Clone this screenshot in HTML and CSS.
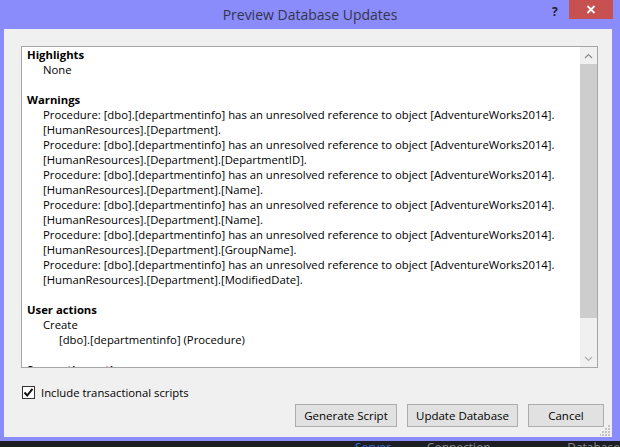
FILE: index.html
```html
<!DOCTYPE html>
<html lang="en">
<head>
    <meta charset="UTF-8">
    <title>Preview Database Updates</title>
    <link rel="stylesheet" href="styles.css">
</head>
<body>
    <div class="window">
        <div class="titlebar">
            <div class="title">Preview Database Updates</div>
            <div class="help">?</div>
            <div class="close">
                <svg width="10" height="9" viewBox="0 0 10 9"><path d="M1.5 1 L8.5 8 M8.5 1 L1.5 8" stroke="#fff" stroke-width="1.8"/></svg>
            </div>
        </div>

        <div class="client">
            <div class="panel">
                <div class="report">
                    <div class="head">Highlights</div>
                    <div class="l1">None</div>
                    <div class="blank"></div>

                    <div class="head">Warnings</div>
                    <div class="l1">Procedure: [dbo].[departmentinfo] has an unresolved reference to object [AdventureWorks2014].<br>[HumanResources].[Department].</div>
                    <div class="l1">Procedure: [dbo].[departmentinfo] has an unresolved reference to object [AdventureWorks2014].<br>[HumanResources].[Department].[DepartmentID].</div>
                    <div class="l1">Procedure: [dbo].[departmentinfo] has an unresolved reference to object [AdventureWorks2014].<br>[HumanResources].[Department].[Name].</div>
                    <div class="l1">Procedure: [dbo].[departmentinfo] has an unresolved reference to object [AdventureWorks2014].<br>[HumanResources].[Department].[Name].</div>
                    <div class="l1">Procedure: [dbo].[departmentinfo] has an unresolved reference to object [AdventureWorks2014].<br>[HumanResources].[Department].[GroupName].</div>
                    <div class="l1">Procedure: [dbo].[departmentinfo] has an unresolved reference to object [AdventureWorks2014].<br>[HumanResources].[Department].[ModifiedDate].</div>
                    <div class="blank"></div>

                    <div class="head">User actions</div>
                    <div class="l1">Create</div>
                    <div class="l2">[dbo].[departmentinfo] (Procedure)</div>
                    <div class="blank"></div>

                    <div class="head">Supporting actions</div>
                </div>
                <div class="scrollbar">
                    <div class="arrow">
                        <svg width="9" height="6" viewBox="0 0 9 6"><path d="M1 5 L4.5 1.5 L8 5" fill="none" stroke="#8a8a8a" stroke-width="1.2"/></svg>
                    </div>
                    <div class="thumb"></div>
                    <div class="track"></div>
                    <div class="arrow">
                        <svg width="9" height="6" viewBox="0 0 9 6"><path d="M1 1 L4.5 4.5 L8 1" fill="none" stroke="#b0b0b0" stroke-width="1.2"/></svg>
                    </div>
                </div>
            </div>

            <label class="option">
                <span class="checkbox">
                    <svg width="11" height="11" viewBox="0 0 11 11"><path d="M1.5 5.5 L4.2 8.5 L9.5 1.8" fill="none" stroke="#111" stroke-width="2"/></svg>
                </span>
                Include transactional scripts
            </label>

            <div class="buttons">
                <button class="btn generate">Generate Script</button>
                <button class="btn update">Update Database</button>
                <button class="btn cancel">Cancel</button>
            </div>

            <svg class="grip" width="11" height="11" viewBox="0 0 11 11">
                <rect x="8" y="0" width="2" height="2" fill="#c4c4c4"/>
                <rect x="5" y="3" width="2" height="2" fill="#c4c4c4"/>
                <rect x="8" y="3" width="2" height="2" fill="#c4c4c4"/>
                <rect x="2" y="6" width="2" height="2" fill="#c4c4c4"/>
                <rect x="5" y="6" width="2" height="2" fill="#c4c4c4"/>
                <rect x="8" y="6" width="2" height="2" fill="#c4c4c4"/>
                <rect x="-1" y="9" width="2" height="2" fill="#c4c4c4"/>
                <rect x="2" y="9" width="2" height="2" fill="#c4c4c4"/>
                <rect x="5" y="9" width="2" height="2" fill="#c4c4c4"/>
                <rect x="8" y="9" width="2" height="2" fill="#c4c4c4"/>
            </svg>
        </div>
    </div>

    <!-- кусок окна под диалогом -->
    <div class="behind">
        <span class="server">Server</span>
        <span class="conn">Connection name</span>
        <span class="conn last">Database</span>
    </div>
</body>
</html>
```

FILE: styles.css
```css
body {
    margin: 0;
    width: 620px;
    height: 447px;
    overflow: hidden;
    background: #1d1d24;
    font-family: "Open Sans", "Noto Sans", Arial, sans-serif;
    font-size: 11.3px;
    color: #000;
}

.window {
    height: 441px;
    background: #8a8cfc;
    display: flex;
    flex-direction: column;
}

.titlebar {
    position: relative;
    height: 29px;
    flex: none;
}

.title {
    text-align: center;
    font-size: 14px;
    line-height: 29px;
    color: #34344a;
}

.help {
    position: absolute;
    left: 552px;
    top: 3px;
    font-size: 12px;
    font-weight: bold;
    color: #222;
}

.close {
    position: absolute;
    left: 569px;
    top: 0;
    width: 44px;
    height: 19px;
    background: #c75050;
    display: flex;
    align-items: center;
    justify-content: center;
}

.client {
    position: relative;
    flex: 1;
    margin: 0 8px 4px 4px;
    padding: 17px 8px 0 17px;
    background: #f0f0f0;
    display: flex;
    flex-direction: column;
}

.panel {
    height: 322px;
    margin-right: 6px;
    box-sizing: border-box;
    border: 1px solid #a6a6a6;
    background: #fff;
    display: flex;
}

.report {
    flex: 1;
    overflow: hidden;
    padding: 0 0 0 5px;
    line-height: 15px;
    white-space: nowrap;
}

.head {
    font-weight: bold;
}

.l1 {
    padding-left: 16px;
}

.l2 {
    padding-left: 32px;
}

.blank {
    height: 15px;
}

.scrollbar {
    width: 17px;
    flex: none;
    background: #f0f0f0;
    display: flex;
    flex-direction: column;
}

.arrow {
    height: 17px;
    display: flex;
    align-items: center;
    justify-content: center;
}

.thumb {
    height: 254px;
    background: #cdcdcd;
}

.track {
    flex: 1;
}

.option {
    display: flex;
    align-items: center;
    gap: 6px;
    height: 15px;
    margin: 17px 0 0 1px;
}

.checkbox {
    width: 11px;
    height: 11px;
    border: 1px solid #333;
    background: #fff;
    display: flex;
}

.buttons {
    display: flex;
    justify-content: flex-end;
    gap: 10px;
    margin-top: 4px;
}

.btn {
    height: 23px;
    padding: 0;
    border: 1px solid #adadad;
    background: #e1e1e1;
    font-family: inherit;
    font-size: 11.5px;
    color: #000;
}

.generate { width: 102px; }
.update { width: 111px; }
.cancel { width: 76px; }

.grip {
    position: absolute;
    right: 1px;
    bottom: 1px;
}

.behind {
    height: 6px;
    overflow: hidden;
    display: flex;
    padding-left: 355px;
    font-size: 12px;
    line-height: 12px;
}

.behind span {
    margin-top: 1px;
}

.server {
    color: #3a72d8;
}

.conn {
    color: #8a8a8a;
    margin-left: 36px;
}

.last {
    margin-left: 58px;
}
```
